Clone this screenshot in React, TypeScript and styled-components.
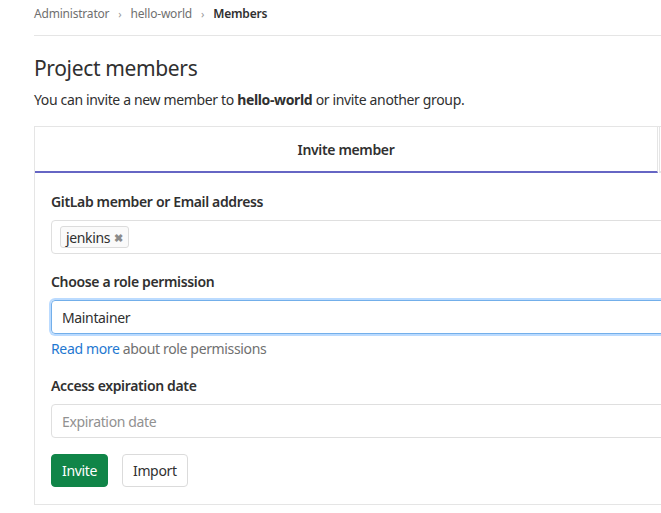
import React from 'react';
import styled, { createGlobalStyle } from 'styled-components';

const GlobalStyle = createGlobalStyle`
  html, body {
    margin: 0;
    padding: 0;
    background: #fff;
    overflow: hidden;
  }
  body {
    font-family: 'Noto Sans', 'Open Sans', 'Liberation Sans', sans-serif;
    color: #303030;
    letter-spacing: -0.35px;
  }
`;

const Page = styled.div`
  width: 1260px;
  padding-left: 34px;
`;

const Breadcrumbs = styled.nav`
  display: flex;
  align-items: center;
  height: 26px;
  padding-bottom: 9px;
  border-bottom: 1px solid #e5e5e5;
  font-size: 12px;
  letter-spacing: -0.2px;
`;

const Crumb = styled.span<{ $current?: boolean }>`
  color: ${(p) => (p.$current ? '#303030' : '#707070')};
  font-weight: ${(p) => (p.$current ? 600 : 400)};
`;

const Chevron = styled.span`
  color: #999;
  font-size: 11px;
  margin: 0 9px;
`;

const Title = styled.h1`
  margin: 16px 0 0;
  font-size: 21px;
  font-weight: 400;
  line-height: 32px;
`;

const Lead = styled.p`
  margin: 6px 0 0;
  font-size: 14px;
  line-height: 20px;

  strong {
    font-weight: 700;
  }
`;

const Card = styled.div`
  margin-top: 16px;
  border: 1px solid #e5e5e5;
  border-right: none;
`;

const Tabs = styled.div`
  display: flex;
`;

const Tab = styled.div<{ $active?: boolean }>`
  width: ${(p) => (p.$active ? '622px' : '600px')};
  height: 44px;
  display: flex;
  align-items: center;
  justify-content: center;
  font-size: 14px;
  font-weight: 600;
  color: #303030;
  border-bottom: 2px solid ${(p) => (p.$active ? '#6666c4' : '#e5e5e5')};
  border-right: ${(p) => (p.$active ? '1px solid #e5e5e5' : 'none')};
  border-left: ${(p) => (p.$active ? 'none' : '1px solid #e5e5e5')};
  margin-left: ${(p) => (p.$active ? '0' : '1px')};
`;

const Body = styled.div`
  padding: 19px 16px 17px;
  width: 1000px;
`;

const Group = styled.div`
  margin-bottom: 18px;
`;

const Label = styled.div`
  font-size: 14px;
  font-weight: 600;
  line-height: 20px;
  margin-bottom: 8px;
`;

const Field = styled.div<{ $focus?: boolean }>`
  height: 34px;
  box-sizing: border-box;
  display: flex;
  align-items: center;
  padding: 0 10px;
  border: 1px solid ${(p) => (p.$focus ? '#73afea' : '#dfdfdf')};
  border-radius: 4px;
  box-shadow: ${(p) => (p.$focus ? '0 0 0 2px rgba(170, 210, 255, 0.8)' : 'none')};
  font-size: 14px;
  color: #303030;
`;

const Placeholder = styled.span`
  color: #919191;
`;

const Token = styled.span`
  display: inline-flex;
  align-items: center;
  gap: 4px;
  height: 22px;
  box-sizing: border-box;
  margin-left: -2px;
  padding: 0 5px;
  border: 1px solid #dcdcdc;
  border-radius: 3px;
  background: #fafafa;
  font-size: 14px;
`;

const TokenClose = styled.span`
  color: #8a8a8a;
  font-size: 11px;
  font-weight: 700;
`;

const Help = styled.div`
  margin-top: 6px;
  font-size: 14px;
  line-height: 18px;
  color: #707070;

  a {
    color: #1f78d1;
    text-decoration: none;
  }
`;

const Actions = styled.div`
  display: flex;
  gap: 14px;
  margin-top: 16px;
`;

const Button = styled.button<{ $primary?: boolean }>`
  height: 33px;
  padding: 0 10px;
  font-family: inherit;
  font-size: 14px;
  letter-spacing: -0.35px;
  border-radius: 4px;
  border: 1px solid ${(p) => (p.$primary ? '#108548' : '#dbdbdb')};
  background: ${(p) => (p.$primary ? '#108548' : '#fff')};
  color: ${(p) => (p.$primary ? '#fff' : '#303030')};
`;

export default function App() {
  return (
    <>
      <GlobalStyle />
      <Page>
        <Breadcrumbs>
          <Crumb>Administrator</Crumb>
          <Chevron>›</Chevron>
          <Crumb>hello-world</Crumb>
          <Chevron>›</Chevron>
          <Crumb $current>Members</Crumb>
        </Breadcrumbs>

        <Title>Project members</Title>
        <Lead>
          You can invite a new member to <strong>hello-world</strong> or invite another group.
        </Lead>

        <Card>
          <Tabs>
            <Tab $active>Invite member</Tab>
            <Tab>Invite group</Tab>
          </Tabs>
          <Body>
            <Group>
              <Label>GitLab member or Email address</Label>
              <Field>
                <Token>
                  jenkins <TokenClose>✖</TokenClose>
                </Token>
              </Field>
            </Group>

            <Group>
              <Label>Choose a role permission</Label>
              <Field $focus>Maintainer</Field>
              <Help>
                <a href="#">Read more</a> about role permissions
              </Help>
            </Group>

            <div>
              <Label>Access expiration date</Label>
              <Field>
                <Placeholder>Expiration date</Placeholder>
              </Field>
            </div>

            <Actions>
              <Button $primary>Invite</Button>
              <Button>Import</Button>
            </Actions>
          </Body>
        </Card>
      </Page>
    </>
  );
}
